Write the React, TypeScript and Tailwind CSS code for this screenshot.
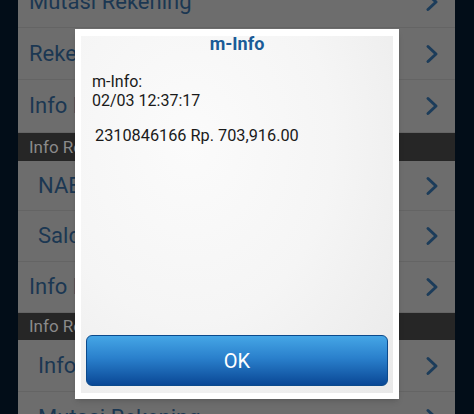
import React from 'react';

type Row =
  | { kind: 'item'; label: string; h: string; indent?: boolean }
  | { kind: 'header'; label: string; h: string };

const rows: Row[] = [
  { kind: 'item', label: 'Mutasi Rekening', h: 'h-[52px]' },
  { kind: 'item', label: 'Rekening Pinjaman', h: 'h-[52px]' },
  { kind: 'item', label: 'Info Kurs', h: 'h-[53px]' },
  { kind: 'header', label: 'Info Reksadana', h: 'h-[28px]' },
  { kind: 'item', label: 'NAB Reksadana', indent: true, h: 'h-[50px]' },
  { kind: 'item', label: 'Saldo Reksadana', indent: true, h: 'h-[51px]' },
  { kind: 'item', label: 'Info Rekening', h: 'h-[51px]' },
  { kind: 'header', label: 'Info Rekening Dana Nasabah', h: 'h-[27px]' },
  { kind: 'item', label: 'Info Saldo', indent: true, h: 'h-[52px]' },
  { kind: 'item', label: 'Mutasi Rekening', indent: true, h: 'h-[52px]' },
];

const Chevron = () => (
  <svg width="14" height="20" viewBox="0 0 14 20" fill="none">
    <path d="M3 2.5 L11 10 L3 17.5" stroke="#1c3c5a" strokeWidth="3" strokeLinecap="round" strokeLinejoin="round" />
  </svg>
);

export default function App() {
  return (
    <div className="relative w-[474px] h-[414px] overflow-hidden flex bg-[#020d18] font-['Roboto',sans-serif]">
      {/* left edge */}
      <div className="w-[18px] shrink-0 bg-[#020d18]" />

      {/* dimmed list behind dialog */}
      <div className="w-[437px] shrink-0 bg-[#6d6d6d] -mt-[24px] flex flex-col">
        {rows.map((r, i) =>
          r.kind === 'header' ? (
            <div key={i} className={`${r.h} shrink-0 bg-[#262626] flex items-center pl-[11px] text-[17px] text-[#8a8a8a] leading-none whitespace-nowrap`}>
              {r.label}
            </div>
          ) : (
            <div
              key={i}
              className={`${r.h} shrink-0 flex items-center justify-between border-b border-[#646464] pr-[16px] ${
                r.indent ? 'pl-[20px]' : 'pl-[11px]'
              }`}
            >
              <span className="text-[22px] text-[#1b3752] leading-none whitespace-nowrap">{r.label}</span>
              <Chevron />
            </div>
          )
        )}
      </div>

      {/* right edge */}
      <div className="flex-1 bg-[#020d18]" />

      {/* dialog */}
      <div className="absolute left-[75px] top-[29px] w-[324px] h-[370px] bg-white p-[6px] pt-[7px] shadow-md">
        <div className="w-full h-full flex flex-col bg-[radial-gradient(ellipse_at_35%_30%,#fbfbfb_0%,#f5f5f5_50%,#e9e9e9_100%)]">
          <div className="h-[18px] mt-[-1px] text-center text-[18px] leading-[18px] font-bold text-[#1a5b97]">m-Info</div>
          <div className="pl-[11px] mt-[19px] text-[16px] leading-[19px] text-[#1a1a1a]">
            <div>m-Info:</div>
            <div>02/03 12:37:17</div>
          </div>
          <div className="pl-[14px] mt-[16px] text-[16.3px] leading-[19px] text-[#1a1a1a]">2310846166 Rp. 703,916.00</div>
          <div className="flex-1" />
          <button className="mx-[5px] mb-[7px] h-[51px] rounded-[6px] border border-[#0b4a8c] bg-[linear-gradient(to_bottom,#45a6e6_0%,#2a80cc_45%,#0a4896_100%)] text-white text-[20px] flex items-center justify-center">
            OK
          </button>
        </div>
      </div>
    </div>
  );
}
